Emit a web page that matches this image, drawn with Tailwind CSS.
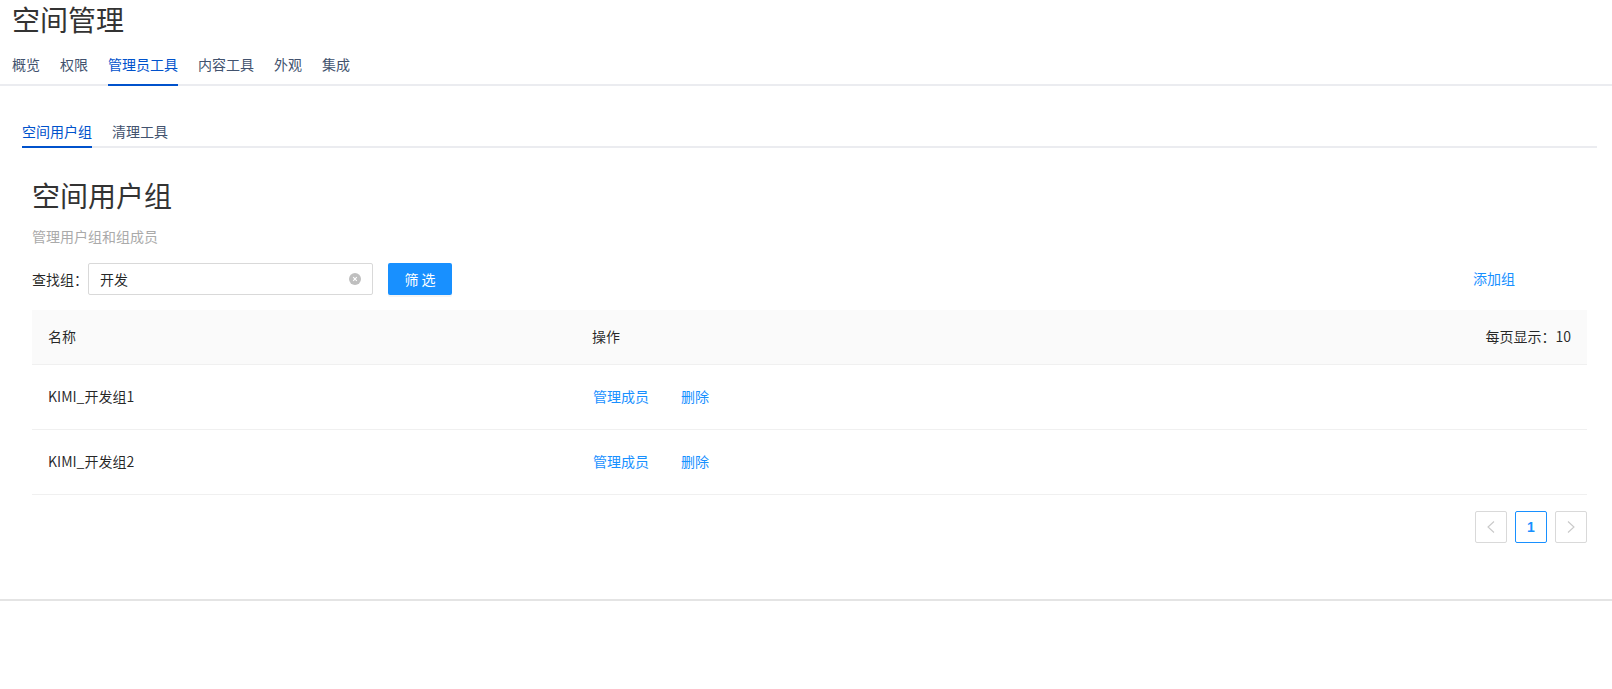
<!DOCTYPE html>
<html lang="zh">
<head>
<meta charset="utf-8">
<script src="https://cdn.jsdelivr.net/npm/@tailwindcss/browser@4"></script>
</head>
<body class="bg-white font-['Noto_Sans_CJK_SC','Noto_Sans',sans-serif] text-[14px] text-[rgba(0,0,0,0.85)] h-[689px] overflow-hidden">
<header class="px-3 border-b-2 border-[#ebecf0] h-[86px]">
  <h1 class="text-[28px] leading-[38px] text-[#333333]">空间管理</h1>
  <nav class="flex gap-5 mt-[13px] text-[#42526e] leading-[20px]">
    <a class="h-[35px] pt-[3px]">概览</a>
    <a class="h-[35px] pt-[3px]">权限</a>
    <a class="h-[35px] pt-[3px] text-[#0052cc] border-b-2 border-[#0052cc]">管理员工具</a>
    <a class="h-[35px] pt-[3px]">内容工具</a>
    <a class="h-[35px] pt-[3px]">外观</a>
    <a class="h-[35px] pt-[3px]">集成</a>
  </nav>
</header>
<main class="pl-[22px] pr-[15px] h-[515px] border-b-2 border-[#e4e4e4]">
  <div class="flex gap-5 border-b-2 border-[#ebecf0] h-[62px] items-end text-[#42526e] leading-[20px]">
    <a class="h-[30px] -mb-[2px] pt-[3px] text-[#0052cc] border-b-2 border-[#0052cc]">空间用户组</a>
    <a class="h-[30px] -mb-[2px] pt-[3px]">清理工具</a>
  </div>
  <section class="pl-[10px] pr-[10px]">
    <h2 class="text-[28px] leading-[40px] mt-[27px] text-[#333333]">空间用户组</h2>
    <p class="text-[#aaaaaa] leading-[20px] mt-[11px]">管理用户组和组成员</p>
    <div class="flex items-center h-[32px] mt-[17px]">
      <label class="w-[56px]">查找组：</label>
      <div class="w-[285px] h-[32px] border border-[#d9d9d9] rounded-[2px] pl-[11px] pr-[11px] flex items-center justify-between">
        <span>开发</span>
        <svg class="w-3 h-3" viewBox="0 0 12 12"><circle cx="6" cy="6" r="6" fill="#bfbfbf"/><path d="M4.2 4.2l3.6 3.6M7.8 4.2l-3.6 3.6" stroke="#fff" stroke-width="1.1"/></svg>
      </div>
      <button class="ml-[15px] w-[64px] h-[32px] bg-[#1890ff] text-white rounded-[2px] shadow-[0_2px_0_rgba(0,0,0,0.045)]">筛 选</button>
      <a class="ml-auto mr-[72px] text-[#1890ff] -translate-y-[1px]">添加组</a>
    </div>
    <div class="mt-[15px]">
      <div class="grid grid-cols-[544px_1fr_auto] items-center h-[55px] bg-[#fafafa] border-b border-[#f0f0f0] pl-4 pr-4 pb-[2px]">
        <span>名称</span><span>操作</span><span>每页显示：10</span>
      </div>
      <div class="grid grid-cols-[544px_1fr] items-center h-[65px] border-b border-[#f0f0f0] pl-4 pr-4 pb-[2px]">
        <span>KIMI_开发组1</span>
        <span class="flex gap-[32px] text-[#1890ff] pl-[1px]"><a>管理成员</a><a>删除</a></span>
      </div>
      <div class="grid grid-cols-[544px_1fr] items-center h-[65px] border-b border-[#f0f0f0] pl-4 pr-4 pb-[2px]">
        <span>KIMI_开发组2</span>
        <span class="flex gap-[32px] text-[#1890ff] pl-[1px]"><a>管理成员</a><a>删除</a></span>
      </div>
      <div class="flex justify-end gap-2 mt-4">
        <span class="w-8 h-8 border border-[#d9d9d9] rounded-[2px] flex items-center justify-center"><svg class="w-3 h-3" viewBox="0 0 12 12" fill="none"><path d="M9 .5L3 6l6 5.5" stroke="#c9c9c9" stroke-width="1.1"/></svg></span>
        <span class="w-8 h-8 border border-[#1890ff] rounded-[2px] flex items-center justify-center text-[#1890ff] font-semibold font-['Liberation_Sans',sans-serif]">1</span>
        <span class="w-8 h-8 border border-[#d9d9d9] rounded-[2px] flex items-center justify-center"><svg class="w-3 h-3" viewBox="0 0 12 12" fill="none"><path d="M3 .5L9 6l-6 5.5" stroke="#c9c9c9" stroke-width="1.1"/></svg></span>
      </div>
    </div>
  </section>
</main>
</body>
</html>
